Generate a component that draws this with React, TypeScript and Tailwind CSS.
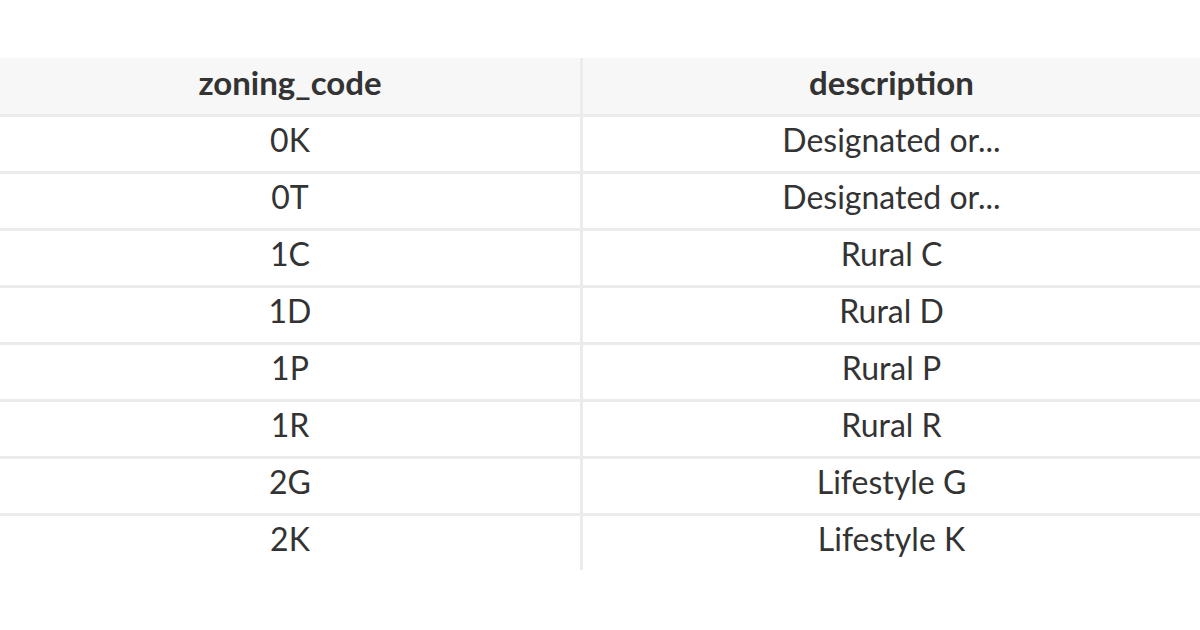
const rows: [string, string][] = [
  ["0K", "Designated or..."],
  ["0T", "Designated or..."],
  ["1C", "Rural C"],
  ["1D", "Rural D"],
  ["1P", "Rural P"],
  ["1R", "Rural R"],
  ["2G", "Lifestyle G"],
  ["2K", "Lifestyle K"],
];

export default function App() {
  return (
    <div className="w-[1200px] h-[630px] bg-white pt-[58px] text-[#333333] text-[32px] leading-none font-['Lato','Noto_Sans',sans-serif] overflow-hidden">
      <div className="flex h-[56px] bg-[#f7f7f7] font-bold text-[33px]">
        <div className="w-[580px] flex items-center justify-center pb-[8px]">zoning_code</div>
        <div className="flex-1 flex items-center justify-center pb-[8px] border-l-[3px] border-[#ebebeb]">
          description
        </div>
      </div>
      {rows.map(([code, desc], i) => (
        <div
          key={code}
          className={`flex border-t-[3px] border-[#ebebeb] ${i === rows.length - 1 ? "h-[59px] pb-[2px]" : "h-[57px]"}`}
        >
          <div className="w-[580px] flex items-center justify-center pb-[9px]">{code}</div>
          <div className="flex-1 flex items-center justify-center pb-[9px] border-l-[3px] border-[#ebebeb]">
            {desc}
          </div>
        </div>
      ))}
    </div>
  );
}
